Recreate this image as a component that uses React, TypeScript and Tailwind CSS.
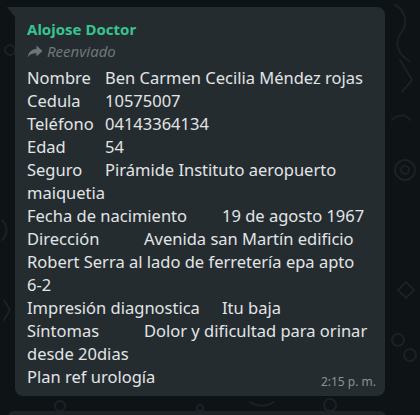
import React from "react";

const message =
  "Nombre\tBen Carmen Cecilia Méndez rojas\nCedula\t10575007\nTeléfono\t04143364134\nEdad\t54\nSeguro\tPirámide Instituto aeropuerto maiquetia\nFecha de nacimiento\t19 de agosto 1967\nDirección\t\tAvenida san Martín edificio Robert Serra al lado de ferretería epa apto 6-2\nImpresión diagnostica\tItu baja\nSíntomas\t\tDolor y dificultad para orinar desde 20dias";

const Wallpaper = () => (
  <svg className="absolute inset-0 w-full h-full" viewBox="0 0 420 415" fill="none">
    <g stroke="#1a2226" strokeWidth="2" strokeLinecap="round">
      <circle cx="10" cy="50" r="5" />
      <path d="M395 5c10 5 14 18 6 28s-2 22 8 28" />
      <path d="M400 60l12 20l-10 12" />
      <circle cx="405" cy="170" r="10" />
      <circle cx="405" cy="170" r="4" />
      <path d="M392 120c6-6 14-6 18 0" />
      <path d="M398 290l8 8l8-8l-8-8z" />
      <circle cx="398" cy="340" r="6" />
      <circle cx="410" cy="355" r="6" />
      <path d="M2 220c6 6 6 14 0 20" />
      <path d="M4 300l6 10l-6 10" />
      <circle cx="60" cy="406" r="5" />
      <circle cx="200" cy="408" r="3" />
      <path d="M250 402c8 5 16 5 24 0" />
      <circle cx="330" cy="405" r="6" />
    </g>
  </svg>
);

const ForwardIcon = () => (
  <svg width="16" height="13" viewBox="0 0 16 13" className="shrink-0">
    <path
      d="M9.5 0.5L15.5 6L9.5 11.5V8.3C5.2 8.3 2.4 9.6 0.5 12.5C1.2 8.2 3.6 4.6 9.5 3.8V0.5Z"
      fill="#6d7478"
    />
  </svg>
);

export default function App() {
  return (
    <div
      className="relative w-[420px] h-[415px] overflow-hidden bg-[#0e1316]"
      style={{ fontFamily: '"Noto Sans", "Open Sans", sans-serif' }}
    >
      <Wallpaper />
      <div className="relative pt-[7px] pl-[7px]">
        <div className="flex">
          {/* tail */}
          <div className="w-[8px] h-[10px] bg-[#252c30] [clip-path:polygon(0_0,100%_0,100%_100%)]" />
          <div className="w-[370px] bg-[#252c30] rounded-[8px] rounded-tl-none pl-[12px] pr-[9px] pt-[12px] pb-[8px]">
            <div className="text-[15px] font-bold text-[#36c590] leading-[20px]">Alojose Doctor</div>
            <div className="flex items-center gap-[4px] mt-[2px] text-[#6f767a] italic text-[15px] leading-[20px]">
              <ForwardIcon />
              <span>Reenviado</span>
            </div>
            <div className="mt-[5px] whitespace-pre-wrap [tab-size:39px] text-[16.5px] leading-[23px] text-[#e2e5e6] pr-[4px]">
              {message}
            </div>
            <div className="flex items-end justify-between">
              <span className="text-[16.5px] leading-[23px] text-[#e2e5e6]">Plan ref urología</span>
              <span className="text-[12px] leading-[14px] text-[#8a9194] -mb-[1px]">2:15 p. m.</span>
            </div>
          </div>
        </div>
        <div className="ml-[1px] mt-[15px] w-[378px] h-[10px] bg-[#1d2327] rounded-t-[6px]" />
      </div>
    </div>
  );
}
